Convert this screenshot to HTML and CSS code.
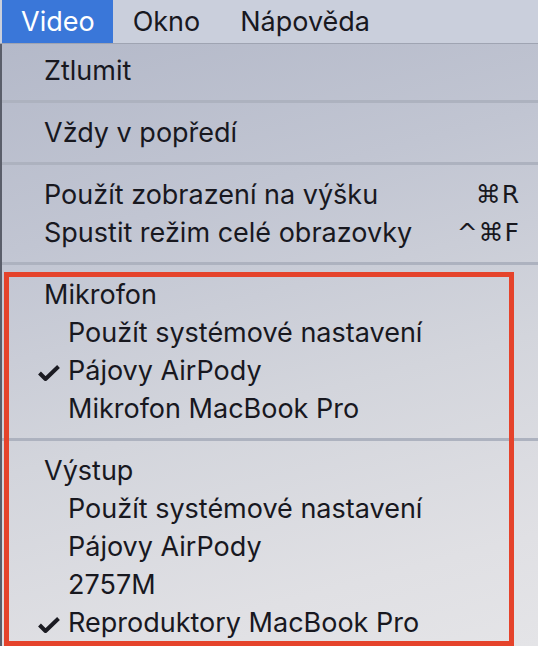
FILE: index.html
```html
<!DOCTYPE html>
<html lang="cs">
<head>
<meta charset="UTF-8">
<meta name="viewport" content="width=device-width, initial-scale=1.0">
<title>Video menu</title>
<link rel="stylesheet" href="styles.css">
</head>
<body>

<header class="menubar">
    <span class="mb-item active">Video</span>
    <span class="mb-item">Okno</span>
    <span class="mb-item">Nápověda</span>
</header>

<div class="menu">
    <div class="item">Ztlumit</div>
    <div class="sep"></div>
    <div class="item">Vždy v popředí</div>
    <div class="sep"></div>
    <div class="item"><span>Použít zobrazení na výšku</span><span class="key">⌘R</span></div>
    <div class="item"><span>Spustit režim celé obrazovky</span><span class="key">^⌘F</span></div>
    <div class="sep"></div>

    <!-- the highlighted audio part -->
    <div class="highlight">
        <div class="item group">Mikrofon</div>
        <div class="item sub">Použít systémové nastavení</div>
        <div class="item sub"><span class="check"><svg width="22" height="16" viewBox="0 0 22 16"><path d="M1.5 8 L7.5 14 L20.5 1.5" fill="none" stroke="#1b1b22" stroke-width="4" stroke-linejoin="round"/></svg></span>Pájovy AirPody</div>
        <div class="item sub">Mikrofon MacBook Pro</div>
        <div class="sep wide"></div>
        <div class="item group">Výstup</div>
        <div class="item sub">Použít systémové nastavení</div>
        <div class="item sub">Pájovy AirPody</div>
        <div class="item sub">2757M</div>
        <div class="item sub"><span class="check"><svg width="22" height="16" viewBox="0 0 22 16"><path d="M1.5 8 L7.5 14 L20.5 1.5" fill="none" stroke="#1b1b22" stroke-width="4" stroke-linejoin="round"/></svg></span>Reproduktory MacBook Pro</div>
    </div>
</div>

</body>
</html>
```

FILE: styles.css
```css
html, body {
    margin: 0;
    padding: 0;
    width: 538px;
    height: 646px;
    overflow: hidden;
    font-family: Inter, "Noto Sans", sans-serif;
    font-size: 27px;
    color: #18181f;
    background: #d9dae0;
}
.menubar {
    display: flex;
    height: 43px;
    padding-left: 2px;
    background: #cacfdc;
    border-bottom: 1px solid #9fa4b2;
}
.mb-item {
    line-height: 43px;
    padding: 0 20px;
}
.mb-item.active {
    background: #3a77d9;
    color: #fff;
    padding: 0 18px 0 19px;
}
.menu {
    height: 602px;
    padding-top: 8px;
    box-sizing: border-box;
    border-left: 2px solid #5a5e6a;
    overflow: hidden;
    background: linear-gradient(165deg, #b4b9c9 0%, #c1c5d2 28%, #d3d5dc 58%, #e0e0e4 85%, #e4e4e7 100%);
}
.item {
    display: flex;
    justify-content: space-between;
    height: 38px;
    line-height: 38px;
    padding: 0 18px 0 42px;
    white-space: nowrap;
}
.key {
    font-family: "DejaVu Sans", Inter, sans-serif;
    font-size: 25px;
    letter-spacing: 1px;
}
.sep {
    height: 3px;
    margin: 10px 0 11px;
    background: #adb2bf;
}
.highlight {
    width: 510px;
    margin: -4px 0 0 2px;
    padding: 4px;
    box-sizing: border-box;
    outline: 5px solid #e5432b;
    outline-offset: -5px;
}
.highlight .item {
    padding-left: 36px;
    justify-content: flex-start;
}
.highlight .item.sub {
    padding-left: 60px;
}
.highlight .sep.wide {
    margin-left: -6px;
    margin-right: -40px;
}
.check {
    display: inline-block;
    width: 30px;
    margin-left: -30px;
}
.check svg {
    vertical-align: -1px;
}
```
